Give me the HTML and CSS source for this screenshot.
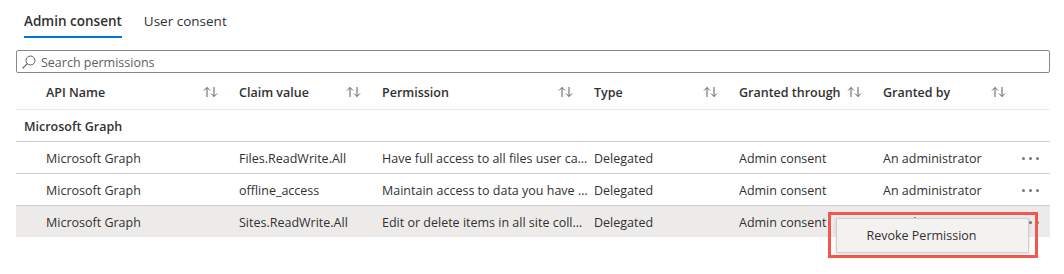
FILE: index.html
```html
<!DOCTYPE html>
<html lang="en">
<head>
    <meta charset="UTF-8">
    <title>Permissions</title>
    <link rel="stylesheet" href="styles.css">
</head>
<body>
    <div class="page">
        <div class="tabs">
            <div class="tab active">Admin consent</div>
            <div class="tab">User consent</div>
        </div>

        <div class="search">
            <svg class="search-icon" width="16" height="16" viewBox="0 0 16 16">
                <circle cx="9.5" cy="6.5" r="4.5" fill="none" stroke="#605e5c" stroke-width="1"/>
                <line x1="6.3" y1="9.7" x2="1.5" y2="14.5" stroke="#605e5c" stroke-width="1.1"/>
            </svg>
            <input type="text" placeholder="Search permissions">
        </div>

        <div class="grid">
            <div class="row header">
                <div></div>
                <div class="hcell">API Name <span class="sort"></span></div>
                <div class="hcell">Claim value <span class="sort"></span></div>
                <div class="hcell">Permission <span class="sort"></span></div>
                <div class="hcell">Type <span class="sort"></span></div>
                <div class="hcell">Granted through <span class="sort"></span></div>
                <div class="hcell last">Granted by <span class="sort"></span></div>
            </div>

            <div class="group">Microsoft Graph</div>

            <div class="row item">
                <div></div>
                <div class="cell">Microsoft Graph</div>
                <div class="cell">Files.ReadWrite.All</div>
                <div class="cell">Have full access to all files user can access</div>
                <div class="cell">Delegated</div>
                <div class="cell">Admin consent</div>
                <div class="cell last">An administrator <span class="more"><i></i><i></i><i></i></span></div>
            </div>
            <div class="row item">
                <div></div>
                <div class="cell">Microsoft Graph</div>
                <div class="cell">offline_access</div>
                <div class="cell">Maintain access to data you have given it access to</div>
                <div class="cell">Delegated</div>
                <div class="cell">Admin consent</div>
                <div class="cell last">An administrator <span class="more"><i></i><i></i><i></i></span></div>
            </div>
            <div class="row item selected">
                <div></div>
                <div class="cell">Microsoft Graph</div>
                <div class="cell">Sites.ReadWrite.All</div>
                <div class="cell">Edit or delete items in all site collections</div>
                <div class="cell">Delegated</div>
                <div class="cell">Admin consent</div>
                <div class="cell last">An administrator <span class="more"><i></i><i></i><i></i></span></div>

                <div class="menu-callout">
                    <div class="menu">Revoke Permission</div>
                </div>
            </div>
        </div>
    </div>

    <template id="sort-icon">
        <svg width="15" height="12" viewBox="0 0 15 12">
            <path d="M4 11V1.5M1 4.5L4 1.5L7 4.5" fill="none" stroke="#605e5c" stroke-width="1"/>
            <path d="M11 1V10.5M8 7.5L11 10.5L14 7.5" fill="none" stroke="#605e5c" stroke-width="1"/>
        </svg>
    </template>

    <script>
        // fill every sort slot with the same arrows icon
        const icon = document.getElementById('sort-icon').innerHTML;
        document.querySelectorAll('.sort').forEach(function(el) {
            el.innerHTML = icon;
        });
    </script>
</body>
</html>
```

FILE: styles.css
```css
html, body {
    height: 100%;
}
body {
    margin: 0;
    min-height: 274px;
    font-family: "Open Sans", "Noto Sans", Arial, sans-serif;
    font-size: 12.5px;
    color: #323130;
    background: #fff;
}
.page {
    padding: 0 14px 0 16px;
}
.tabs {
    display: flex;
    gap: 22px;
    padding-left: 8px;
    height: 38px;
}
.tab {
    font-size: 13.5px;
    line-height: 20px;
    padding-top: 11px;
    height: 26px;
    box-sizing: border-box;
}
.tab.active {
    font-weight: 600;
    border-bottom: 2px solid #0078d4;
    height: 38px;
    box-sizing: border-box;
}
.search {
    margin-top: 12px;
    height: 23px;
    border: 1px solid #8a8886;
    border-radius: 2px;
    display: flex;
    align-items: center;
    box-sizing: border-box;
    padding-left: 4px;
    padding-top: 1px;
}
.search-icon {
    flex: none;
}
.search input {
    border: none;
    outline: none;
    font-family: inherit;
    font-size: 12.5px;
    color: #323130;
    padding: 0 0 0 4px;
    flex: 1;
    background: transparent;
}
.search input::placeholder {
    color: #605e5c;
}
.row {
    display: grid;
    grid-template-columns: 30px 193px 143px 212px 145px 144px 1fr;
    align-items: center;
}
.header {
    height: 37px;
    padding-top: 2px;
    box-sizing: border-box;
    border-bottom: 1px solid #edebe9;
}
.hcell {
    font-weight: 600;
    display: flex;
    align-items: center;
    justify-content: space-between;
    padding-right: 21px;
}
.hcell.last {
    padding-right: 44px;
}
.sort {
    display: flex;
}
.group {
    font-weight: 600;
    padding: 2px 0 0 8px;
    height: 32px;
    box-sizing: border-box;
    line-height: 29px;
    border-bottom: 1px solid #d2d0ce;
}
.item {
    height: 32px;
    padding-top: 2px;
    box-sizing: border-box;
    border-bottom: 1px solid #d2d0ce;
    position: relative;
}
.item:last-child {
    border-bottom: none;
    height: 31px;
    padding-top: 1px;
}
.item.selected {
    background: #edebe9;
}
.cell {
    white-space: nowrap;
    overflow: hidden;
    text-overflow: ellipsis;
    padding-right: 6px;
}
.cell.last {
    display: flex;
    align-items: center;
    justify-content: space-between;
    padding-right: 11px;
    overflow: visible;
}
.more {
    display: flex;
    gap: 4px;
}
.more i {
    width: 3px;
    height: 3px;
    border-radius: 50%;
    background: #797775;
}
.menu-callout {
    position: absolute;
    left: 812px;
    top: 6px;
    width: 193px;
    height: 34px;
    border: 3px solid #f4574d;
    padding: 3px 6px 3px 5px;
}
.menu {
    background: #f3f2f1;
    border: 1px solid #d2d0ce;
    box-shadow: 0 1px 3px rgba(0, 0, 0, 0.15);
    height: 35px;
    box-sizing: border-box;
    display: flex;
    align-items: center;
    justify-content: center;
    padding-right: 22px;
    font-size: 12.5px;
}
```
